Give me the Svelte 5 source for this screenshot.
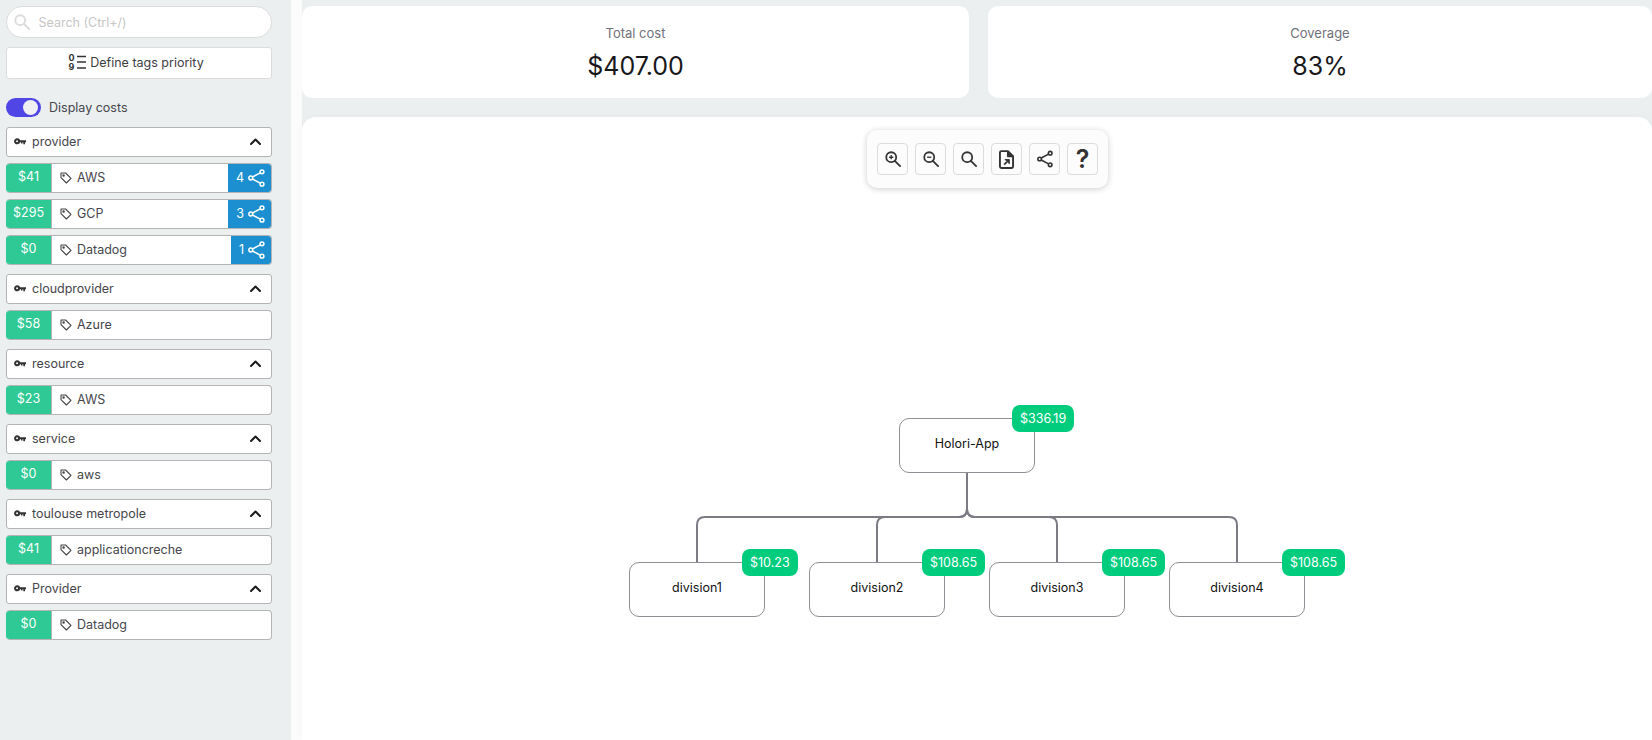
<script>
  const groups = [
    { name: 'provider', rows: [
      { cost: '$41', tag: 'AWS', count: 4 },
      { cost: '$295', tag: 'GCP', count: 3 },
      { cost: '$0', tag: 'Datadog', count: 1 }
    ] },
    { name: 'cloudprovider', rows: [{ cost: '$58', tag: 'Azure' }] },
    { name: 'resource', rows: [{ cost: '$23', tag: 'AWS' }] },
    { name: 'service', rows: [{ cost: '$0', tag: 'aws' }] },
    { name: 'toulouse metropole', rows: [{ cost: '$41', tag: 'applicationcreche' }] },
    { name: 'Provider', rows: [{ cost: '$0', tag: 'Datadog' }] }
  ];
  const nodes = [
    { name: 'Holori-App', cost: '$336.19', x: 597, y: 301 },
    { name: 'division1', cost: '$10.23', x: 327, y: 445 },
    { name: 'division2', cost: '$108.65', x: 507, y: 445 },
    { name: 'division3', cost: '$108.65', x: 687, y: 445 },
    { name: 'division4', cost: '$108.65', x: 867, y: 445 }
  ];
  const edges = [395, 575, 755, 935].map((x) => {
    const cx = 665;
    const s = x < cx ? -1 : 1;
    return `M${cx} 356 V392 Q${cx} 400 ${cx + s * 8} 400 H${x - s * 8} Q${x} 400 ${x} 408 V445`;
  });
</script>

<div class="page">
  <aside class="sidebar">
    <label class="search">
      <svg class="search-icon" viewBox="0 0 16 16" width="16" height="16" fill="none" stroke="#dcdcdc" stroke-width="2" stroke-linecap="round"><circle cx="6.2" cy="6.2" r="4.9"/><path d="M10 10 15 15"/></svg>
      <input placeholder="Search (Ctrl+/)" />
    </label>
    <button class="priority">
      <svg viewBox="0 0 18 20" width="18" height="20">
        <text x="0.5" y="9" class="digit">0</text>
        <text x="0.5" y="17.500" class="digit">9</text>
        <path d="M9 4.500h9M9 10h9M9 16h9" stroke="#333" stroke-width="1.600" fill="none"/>
      </svg>
      <span>Define tags priority</span>
    </button>
    <div class="display">
      <span class="toggle"><span class="knob"></span></span>
      <span>Display costs</span>
    </div>
    <div class="groups">
      {#each groups as group}
        <section class="group">
          <div class="header">
            <svg class="key" viewBox="0 0 12 7" width="12" height="7">
              <circle cx="3.100" cy="3.300" r="2" fill="none" stroke="#333" stroke-width="2.100"/>
              <path d="M5.500 2.300H12V4.200H11V6.200H9.300V4.200H8.500V5.500H7V4.200H5.500Z" fill="#333"/>
            </svg>
            <span class="name">{group.name}</span>
            <svg class="chev" viewBox="0 0 11 7" width="11" height="7" fill="none" stroke="#1a1a1a" stroke-width="2" stroke-linecap="round" stroke-linejoin="round"><path d="M1 6 5.500 1.500 10 6"/></svg>
          </div>
          {#each group.rows as row}
            <div class="row">
              <span class="cost">{row.cost}</span>
              <span class="tag">
                <svg viewBox="0 0 12 12" width="12" height="12" fill="none" stroke="#444" stroke-width="1.100" stroke-linejoin="round"><path d="M1 1h4.600L11 6.400 6.400 11 1 5.600Z"/><circle cx="3.600" cy="3.600" r=".7"/></svg>
                <span>{row.tag}</span>
              </span>
              {#if row.count}
                <span class="count">
                  <span>{row.count}</span>
                  <svg viewBox="0 0 17 18" width="17" height="18" fill="none" stroke="#fff" stroke-width="1.500"><circle cx="2.800" cy="9" r="1.900"/><circle cx="14" cy="2.800" r="1.900"/><circle cx="14" cy="15.200" r="1.900"/><path d="M4.500 8 12.300 3.800M4.500 10 12.300 14.200"/></svg>
                </span>
              {/if}
            </div>
          {/each}
        </section>
      {/each}
    </div>
  </aside>

  <main class="main">
    <div class="stats">
      <div class="stat"><span class="label">Total cost</span><span class="value">$407.00</span></div>
      <div class="stat"><span class="label">Coverage</span><span class="value">83%</span></div>
    </div>
    <div class="chart">
      <div class="tools">
        <button aria-label="zoom in"><svg viewBox="0 0 18 18" width="16" height="16" fill="none" stroke="#333" stroke-width="2"><circle cx="7" cy="7" r="5.600"/><path d="M11 11l6 6" stroke-linecap="round"/><path d="M4.600 7h4.800M7 4.600v4.800" stroke-width="1.500"/></svg></button>
        <button aria-label="zoom out"><svg viewBox="0 0 18 18" width="16" height="16" fill="none" stroke="#333" stroke-width="2"><circle cx="7" cy="7" r="5.600"/><path d="M11 11l6 6" stroke-linecap="round"/><path d="M4.600 7h4.800" stroke-width="1.500"/></svg></button>
        <button aria-label="reset zoom"><svg viewBox="0 0 18 18" width="16" height="16" fill="none" stroke="#333" stroke-width="2"><circle cx="7" cy="7" r="5.600"/><path d="M11 11l6 6" stroke-linecap="round"/></svg></button>
        <button aria-label="export"><svg viewBox="0 0 16 20" width="15" height="19" fill="none" stroke="#333" stroke-width="2" stroke-linejoin="round"><path d="M1 2.500Q1 1 2.500 1H9.500L15 6.500V17.500Q15 19 13.500 19H2.500Q1 19 1 17.500Z"/><path d="M9.500 1V6.500H15" fill="#333"/><path d="M5.500 15.500l3-3" stroke-width="1.800"/><path d="M6.500 10h4.500v4.500Z" fill="#333" stroke-width="1"/></svg></button>
        <button aria-label="share"><svg viewBox="0 0 17 18" width="16" height="18" fill="none" stroke="#333" stroke-width="1.700"><circle cx="2.800" cy="9" r="1.900"/><circle cx="14" cy="2.800" r="1.900"/><circle cx="14" cy="15.200" r="1.900"/><path d="M4.500 8 12.300 3.800M4.500 10 12.300 14.200"/></svg></button>
        <button aria-label="help" class="help">?</button>
      </div>
      <svg class="edges" width="1350" height="623" fill="none" stroke="#7b7b84" stroke-width="2">
        {#each edges as d}<path {d}/>{/each}
      </svg>
      {#each nodes as node}
        <div class="node" style="left:{node.x}px;top:{node.y}px">
          <span>{node.name}</span>
          <span class="badge">{node.cost}</span>
        </div>
      {/each}
    </div>
  </main>
</div>

<style>
  :global(body) {
    margin: 0;
    background: #fff;
  }
  .page {
    display: flex;
    height: 740px;
    overflow: hidden;
    font-family: Inter, "Liberation Sans", sans-serif;
    font-size: 12.500px;
    color: #46464c;
    background: #fbfbfb;
  }
  .sidebar {
    box-sizing: border-box;
    width: 291px;
    flex: none;
    background: #ebeff0;
    padding: 6px 19px 0 6px;
    display: flex;
    flex-direction: column;
  }
  .search {
    box-sizing: border-box;
    height: 32px;
    display: flex;
    align-items: center;
    gap: 8.500px;
    padding-left: 7px;
    background: #fff;
    border: 1px solid #dcdcdc;
    border-radius: 16px;
  }
  .search-icon {
    flex: none;
  }
  .search input {
    flex: 1;
    min-width: 0;
    border: none;
    outline: none;
    background: none;
    padding: 0;
    font: inherit;
  }
  .search input::placeholder {
    color: #c6c6c6;
    opacity: 1;
  }
  .priority {
    box-sizing: border-box;
    height: 32px;
    margin-top: 9px;
    padding: 0 6px 2px 0;
    display: flex;
    align-items: center;
    justify-content: center;
    gap: 4px;
    background: #fff;
    border: 1px solid #dcdcdc;
    border-radius: 3px;
    font: inherit;
    color: #3d3d42;
  }
  .digit {
    font: 700 9px Inter, sans-serif;
    fill: #333;
  }
  .display {
    display: flex;
    align-items: center;
    gap: 8px;
    height: 19px;
    margin-top: 19px;
  }
  .toggle {
    width: 35px;
    height: 19px;
    border-radius: 10px;
    background: #4f46e5;
    position: relative;
  }
  .knob {
    position: absolute;
    right: 3px;
    top: 2px;
    width: 15px;
    height: 15px;
    border-radius: 50%;
    background: #f0f0f3;
  }
  .groups {
    margin-top: 10px;
    display: flex;
    flex-direction: column;
    gap: 9.500px;
  }
  .group {
    display: flex;
    flex-direction: column;
    gap: 6.500px;
  }
  .header {
    box-sizing: border-box;
    height: 29.500px;
    display: flex;
    align-items: center;
    padding: 0 10px 0 7px;
    background: #fff;
    border: 1px solid #b4b4b4;
    border-radius: 3px;
  }
  .key {
    flex: none;
  }
  .name {
    flex: 1;
    margin-left: 6px;
    padding-bottom: 1px;
  }
  .row {
    box-sizing: border-box;
    height: 29.500px;
    display: flex;
    align-items: stretch;
    background: #fff;
    border-radius: 4px;
    overflow: hidden;
    border: 1px solid #b4b4b4;
    border-left: none;
  }
  .cost {
    width: 45px;
    flex: none;
    margin: -1px 0;
    display: flex;
    align-items: center;
    justify-content: center;
    padding-bottom: 2px;
    background: #2ec994;
    color: #fff;
  }
  .tag {
    flex: 1;
    display: flex;
    align-items: center;
    gap: 5px;
    padding-left: 8px;
    border-left: 1px solid #b4b4b4;
  }
  .count {
    margin: -1px -1px -1px 0;
    display: flex;
    align-items: center;
    gap: 4px;
    padding: 0 7px 0 8px;
    background: #1c8fd0;
    color: #fff;
  }
  .main {
    flex: 1;
    min-width: 0;
    margin-left: 11px;
    padding-top: 6px;
    background: #ebeff0;
    display: flex;
    flex-direction: column;
    gap: 19px;
  }
  .stats {
    display: grid;
    grid-template-columns: 667px 664px;
    gap: 19px;
  }
  .stat {
    height: 92px;
    background: #fff;
    border-radius: 10px;
    display: flex;
    flex-direction: column;
    align-items: center;
    box-sizing: border-box;
    padding-top: 18px;
  }
  .label {
    font-size: 13px;
    color: #71717a;
    line-height: 18px;
  }
  .value {
    margin-top: 9px;
    font-size: 25px;
    line-height: 30px;
    color: #18181b;
  }
  .chart {
    position: relative;
    flex: 1;
    background: #fff;
    border-radius: 14px 14px 0 0;
    box-shadow: 0 -2px 8px rgba(0, 0, 0, 0.02);
  }
  .tools {
    position: absolute;
    left: 565px;
    top: 13px;
    box-sizing: border-box;
    width: 241px;
    height: 58px;
    display: flex;
    align-items: center;
    gap: 7px;
    padding: 0 10px;
    background: #fdfcfd;
    border-radius: 10px;
    box-shadow: 0 1px 6px rgba(0, 0, 0, 0.2);
  }
  .tools button {
    box-sizing: border-box;
    width: 31px;
    height: 32px;
    padding: 0;
    display: flex;
    align-items: center;
    justify-content: center;
    background: #fdfcfd;
    border: 1px solid #dcdcdc;
    border-radius: 4px;
  }
  .tools .help {
    font: 600 25px Inter, sans-serif;
    color: #333;
  }
  .edges {
    position: absolute;
    left: 0;
    top: 0;
  }
  .node {
    position: absolute;
    box-sizing: border-box;
    width: 136px;
    height: 55px;
    display: flex;
    align-items: center;
    justify-content: center;
    padding-bottom: 4px;
    background: #fff;
    border: 1px solid #8f8f96;
    border-radius: 10px;
    color: #111;
  }
  .badge {
    position: absolute;
    left: 112px;
    top: -14px;
    height: 27px;
    padding: 0 8px;
    display: flex;
    align-items: center;
    background: #00cc7e;
    border-radius: 8px;
    color: #fff;
    white-space: nowrap;
  }
</style>
